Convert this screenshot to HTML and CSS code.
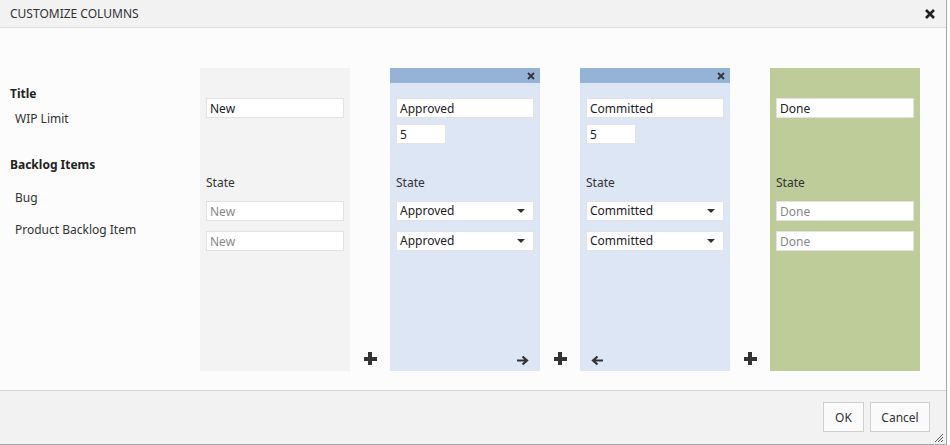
FILE: index.html
```html
<!DOCTYPE html>
<html lang="en">
<head>
  <meta charset="UTF-8">
  <title>Customize Columns</title>
  <link rel="stylesheet" href="styles.css">
</head>
<body>
  <div class="dialog">
    <div class="dialog-header">
      <span class="dialog-title">CUSTOMIZE COLUMNS</span>
      <svg class="close" width="10" height="10" viewBox="0 0 10 10"><path d="M1 1 L9 9 M9 1 L1 9" stroke="#222" stroke-width="2.6"/></svg>
    </div>

    <div class="dialog-body">
      <div class="labels">
        <div class="group-title first">Title</div>
        <div class="sub">WIP Limit</div>
        <div class="group-title">Backlog Items</div>
        <div class="sub bug">Bug</div>
        <div class="sub pbi">Product Backlog Item</div>
      </div>

      <div class="board">
        <div class="column grey">
          <div class="col-head"></div>
          <input class="field name" type="text" value="New">
          <div class="wip-row"></div>
          <div class="state-label">State</div>
          <input class="field disabled" type="text" value="New" readonly>
          <input class="field disabled" type="text" value="New" readonly>
        </div>

        <div class="gap"><span class="plus"></span></div>

        <div class="column blue">
          <div class="col-head bar"><svg width="8" height="8" viewBox="0 0 8 8"><path d="M1 1 L7 7 M7 1 L1 7" stroke="#333" stroke-width="1.8"/></svg></div>
          <input class="field name" type="text" value="Approved">
          <div class="wip-row"><input class="field wip" type="text" value="5"></div>
          <div class="state-label">State</div>
          <div class="field select">Approved<span class="caret"></span></div>
          <div class="field select">Approved<span class="caret"></span></div>
          <div class="col-foot right"><svg width="13" height="11" viewBox="0 0 13 11"><path d="M1 5.5 H11 M6.5 1.5 L11 5.5 L6.5 9.5" stroke="#333" stroke-width="2.2" fill="none"/></svg></div>
        </div>

        <div class="gap"><span class="plus"></span></div>

        <div class="column blue">
          <div class="col-head bar"><svg width="8" height="8" viewBox="0 0 8 8"><path d="M1 1 L7 7 M7 1 L1 7" stroke="#333" stroke-width="1.8"/></svg></div>
          <input class="field name" type="text" value="Committed">
          <div class="wip-row"><input class="field wip" type="text" value="5"></div>
          <div class="state-label">State</div>
          <div class="field select">Committed<span class="caret"></span></div>
          <div class="field select">Committed<span class="caret"></span></div>
          <div class="col-foot left"><svg width="13" height="11" viewBox="0 0 13 11"><path d="M12 5.5 H2 M6.5 1.5 L2 5.5 L6.5 9.5" stroke="#333" stroke-width="2.2" fill="none"/></svg></div>
        </div>

        <div class="gap"><span class="plus"></span></div>

        <div class="column green">
          <div class="col-head"></div>
          <input class="field name" type="text" value="Done">
          <div class="wip-row"></div>
          <div class="state-label">State</div>
          <input class="field disabled" type="text" value="Done" readonly>
          <input class="field disabled" type="text" value="Done" readonly>
        </div>
      </div>
    </div>

    <div class="dialog-footer">
      <button class="btn ok">OK</button>
      <button class="btn">Cancel</button>
      <svg class="grip" width="11" height="11" viewBox="0 0 11 11"><path d="M10 2 L2 10 M10 5 L5 10 M10 8 L8 10" stroke="#555" stroke-width="1"/></svg>
    </div>
  </div>
</body>
</html>
```

FILE: styles.css
```css
body { margin: 0; background: #fff; font-family: "Segoe UI", "Noto Sans", sans-serif; font-size: 12px; color: #222; }
.dialog { width: 946px; height: 444px; border-right: 1px solid #a8a8a8; border-bottom: 1px solid #a8a8a8; background: #fcfcfc; display: flex; flex-direction: column; position: relative; }

.dialog-header { height: 27px; background: #f2f2f2; border-bottom: 1px solid #dcdcdc; display: flex; align-items: center; justify-content: space-between; padding: 0 10px 0 10px; }
.dialog-title { font-size: 12px; color: #333; }
.close { margin-right: 1px; }

.dialog-body { height: 362px; display: flex; align-items: flex-start; padding-top: 40px; box-sizing: border-box; }
.labels { width: 200px; padding-left: 10px; box-sizing: border-box; }
.labels div { height: 16px; line-height: 16px; }
.group-title { font-weight: bold; }
.group-title.first { margin-top: 18px; }
.sub { padding-left: 5px; margin-top: 9px; color: #333; }
.labels .group-title:nth-child(3) { margin-top: 30px; }
.sub.bug { margin-top: 17px; }
.sub.pbi { margin-top: 16px; }

.board { display: flex; height: 303px; }
.column { width: 150px; height: 303px; padding: 0 6px; box-sizing: border-box; display: flex; flex-direction: column; position: relative; }
.column.grey { background: #f3f3f3; }
.column.blue { background: #dce6f4; }
.column.green { background: #bdcc98; }
.col-head { height: 15px; margin: 0 -6px 15px; display: flex; justify-content: flex-end; align-items: center; padding-right: 5px; }
.col-head.bar { background: #95b3d7; }

.field { height: 20px; box-sizing: border-box; border: 1px solid #e2e2e2; background: #fff; font-family: inherit; font-size: 12px; color: #222; padding: 0 3px; width: 138px; margin: 0; outline: none; line-height: 18px; }
.wip-row { height: 20px; margin: 6px 0 31px; }
.field.wip { width: 50px; }
.field.disabled { color: #888; }
.state-label { height: 16px; line-height: 16px; margin-bottom: 10px; color: #333; }
.column .field + .field { margin-top: 10px; }
.select { display: flex; align-items: center; justify-content: space-between; }
.caret { width: 0; height: 0; border-left: 4px solid transparent; border-right: 4px solid transparent; border-top: 4px solid #333; margin-right: 5px; }

.col-foot { position: absolute; bottom: 5px; line-height: 0; }
.col-foot.right { right: 11px; }
.col-foot.left { left: 11px; }

.gap { width: 40px; height: 303px; display: flex; justify-content: center; align-items: flex-end; padding-bottom: 6px; box-sizing: border-box; }
.plus { width: 13px; height: 13px; position: relative; display: block; }
.plus::before, .plus::after { content: ""; position: absolute; background: #333; }
.plus::before { left: 0; top: 4.5px; width: 13px; height: 4px; }
.plus::after { left: 4.5px; top: 0; width: 4px; height: 13px; }

.dialog-footer { flex: 1; background: #f2f2f2; border-top: 1px solid #d6d6d6; display: flex; justify-content: flex-end; align-items: flex-start; padding: 11px 16px 0 0; gap: 6px; position: relative; }
.btn { height: 30px; border: 1px solid #cfcfcf; background: #fafafa; font-family: inherit; font-size: 12px; color: #333; padding: 0 12px; cursor: pointer; }
.btn.ok { width: 41px; padding: 0; }
.btn:last-of-type { width: 60px; padding: 0; }
.grip { position: absolute; right: 2px; bottom: 1px; }
```
